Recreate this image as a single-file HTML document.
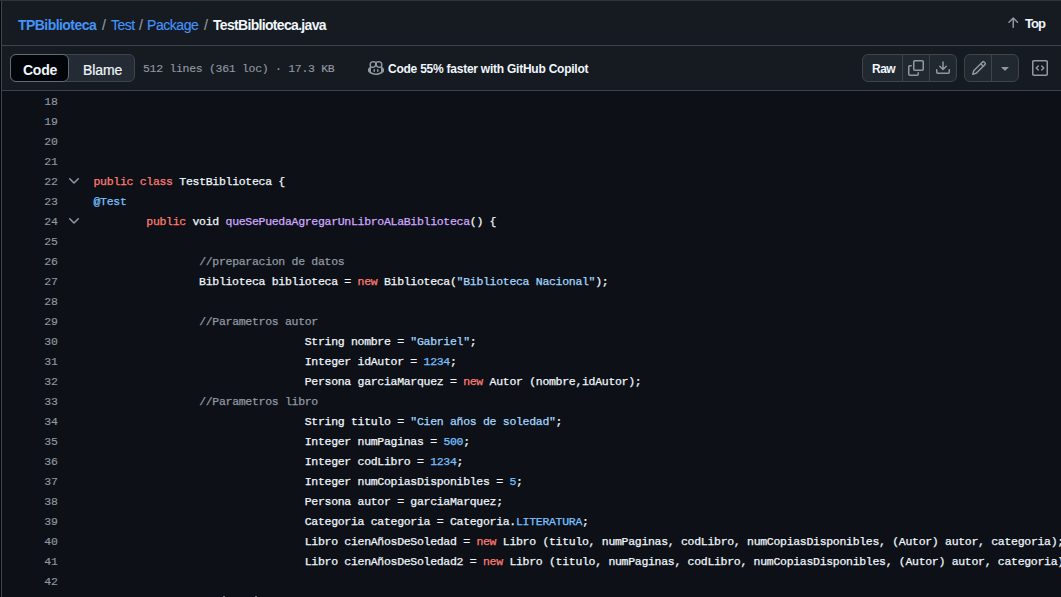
<!DOCTYPE html>
<html><head><meta charset="utf-8">
<style>
*{box-sizing:border-box;margin:0;padding:0}
html,body{width:1061px;height:597px;overflow:hidden;background:#0d1117;font-family:"Liberation Sans",sans-serif;color:#f0f6fc}
.bx{position:absolute}
.t{position:absolute;white-space:pre;line-height:16px;height:16px}
.ic{position:absolute;width:16px;height:16px;fill:#9198a1;overflow:visible}
.n{position:absolute;left:0;width:58px;text-align:right;color:#9198a1;white-space:pre;height:20px;line-height:20px;font-family:"Liberation Mono",monospace;font-size:11.5px;letter-spacing:0px;padding-top:0px;-webkit-text-stroke:0.15px currentColor}
.c{position:absolute;left:93.5px;color:#f0f6fc;white-space:pre;height:20px;line-height:20px;font-family:"Liberation Mono",monospace;font-size:11.5px;letter-spacing:-0.3px;-webkit-text-stroke:0.25px currentColor}
.k{color:#ff7b72}.e{color:#d2a8ff}.s{color:#a5d6ff}.m{color:#79c0ff}.cm{color:#9198a1}
</style></head><body>
<div class="bx" style="left:0;top:1px;width:1px;height:596px;background:#05070a"></div>
<div class="bx" style="left:0;top:0;width:1061px;height:1px;background:#333336"></div>
<div class="bx" style="left:1px;top:1px;width:1060px;height:44px;background:#161b22"></div>
<div class="bx" style="left:1px;top:45px;width:1060px;height:1px;background:#3d444d"></div>
<div class="bx" style="left:1px;top:46px;width:1060px;height:44px;background:#161b22"></div>
<div class="bx" style="left:1px;top:90px;width:1060px;height:1px;background:#3d444d"></div>
<div class="bx" style="left:1px;top:1px;width:1px;height:596px;background:#3d444d"></div>
<div class="bx" style="left:10px;top:54px;width:125px;height:28px;border:1px solid #3d444d;border-radius:6px;background:#252b34"></div>
<div class="bx" style="left:10px;top:54px;width:59px;height:28px;border:1px solid #656c76;border-radius:6px;background:#010409"></div>
<div class="bx" style="left:862px;top:54px;width:95px;height:28px;border:1px solid #3d444d;border-radius:6px;background:#212830"></div>
<div class="bx" style="left:902px;top:55px;width:1px;height:26px;background:#3d444d"></div>
<div class="bx" style="left:929px;top:55px;width:1px;height:26px;background:#3d444d"></div>
<div class="bx" style="left:964px;top:54px;width:55px;height:28px;border:1px solid #3d444d;border-radius:6px;background:#212830"></div>
<div class="bx" style="left:991px;top:55px;width:1px;height:26px;background:#3d444d"></div>
<span class="t" style="left:18px;top:17px;font-size:14px;font-weight:700;letter-spacing:-0.55px;color:#4493f8;font-family:'Liberation Sans',sans-serif;-webkit-text-stroke:0px currentColor">TPBiblioteca</span>
<span class="t" style="left:102px;top:17px;font-size:14px;font-weight:400;letter-spacing:0px;color:#9198a1;font-family:'Liberation Sans',sans-serif;-webkit-text-stroke:0.2px currentColor">/</span>
<span class="t" style="left:111px;top:17px;font-size:14px;font-weight:400;letter-spacing:-0.5px;color:#4493f8;font-family:'Liberation Sans',sans-serif;-webkit-text-stroke:0.15px currentColor">Test</span>
<span class="t" style="left:139px;top:17px;font-size:14px;font-weight:400;letter-spacing:0px;color:#9198a1;font-family:'Liberation Sans',sans-serif;-webkit-text-stroke:0.2px currentColor">/</span>
<span class="t" style="left:147px;top:17px;font-size:14px;font-weight:400;letter-spacing:-0.45px;color:#4493f8;font-family:'Liberation Sans',sans-serif;-webkit-text-stroke:0.15px currentColor">Package</span>
<span class="t" style="left:204px;top:17px;font-size:14px;font-weight:400;letter-spacing:0px;color:#9198a1;font-family:'Liberation Sans',sans-serif;-webkit-text-stroke:0.2px currentColor">/</span>
<span class="t" style="left:213px;top:17px;font-size:14px;font-weight:700;letter-spacing:-0.68px;color:#f0f6fc;font-family:'Liberation Sans',sans-serif;-webkit-text-stroke:0px currentColor">TestBiblioteca.java</span>
<span class="t" style="left:1025px;top:16px;font-size:13px;font-weight:700;letter-spacing:-0.9px;color:#f0f6fc;font-family:'Liberation Sans',sans-serif;-webkit-text-stroke:0px currentColor">Top</span>
<span class="t" style="left:23px;top:62px;font-size:14px;font-weight:700;letter-spacing:-0.25px;color:#f0f6fc;font-family:'Liberation Sans',sans-serif;-webkit-text-stroke:0px currentColor">Code</span>
<span class="t" style="left:83px;top:62px;font-size:14px;font-weight:400;letter-spacing:-0.1px;color:#f0f6fc;font-family:'Liberation Sans',sans-serif;-webkit-text-stroke:0.2px currentColor">Blame</span>
<span class="t" style="left:143px;top:61px;font-size:11.5px;font-weight:400;letter-spacing:-0.3px;color:#9198a1;font-family:'Liberation Mono',monospace;-webkit-text-stroke:0.15px currentColor">512 lines (361 loc) · 17.3 KB</span>
<span class="t" style="left:388px;top:61px;font-size:12px;font-weight:700;letter-spacing:-0.24px;color:#f0f6fc;font-family:'Liberation Sans',sans-serif;-webkit-text-stroke:0px currentColor">Code 55% faster with GitHub Copilot</span>
<span class="t" style="left:872px;top:61px;font-size:12px;font-weight:700;letter-spacing:-0.5px;color:#f0f6fc;font-family:'Liberation Sans',sans-serif;-webkit-text-stroke:0px currentColor">Raw</span>
<svg class="ic" style="left:1005px;top:15px" viewBox="0 0 16 16"><path d="M3.47 7.78a.75.75 0 0 1 0-1.06l4.25-4.25a.75.75 0 0 1 1.06 0l4.25 4.25a.751.751 0 0 1-.018 1.042.751.751 0 0 1-1.042.018L9 4.81v7.44a.75.75 0 0 1-1.5 0V4.81L4.53 7.78a.75.75 0 0 1-1.06 0Z"/></svg>
<svg class="ic" style="left:368px;top:60px" viewBox="0 0 16 16"><path d="M7.998 15.035c-4.562 0-7.873-2.914-7.998-3.749V9.338c.085-.628.677-1.686 1.588-2.065.013-.07.024-.143.036-.218.029-.183.06-.384.126-.612-.201-.508-.254-1.084-.254-1.656 0-.87.128-1.769.693-2.484.579-.733 1.494-1.124 2.724-1.261 1.206-.134 2.262.034 2.944.765.05.053.096.108.139.165.044-.057.094-.112.143-.165.682-.731 1.738-.899 2.944-.765 1.23.137 2.145.528 2.724 1.261.566.715.693 1.614.693 2.484 0 .572-.053 1.148-.254 1.656.066.228.098.429.126.612.012.076.024.148.037.218.924.385 1.522 1.471 1.591 2.095v1.872c0 .766-3.351 3.795-8.002 3.795Zm0-1.485c2.28 0 4.584-1.11 5.002-1.433V7.862l-.023-.116c-.49.21-1.075.291-1.727.291-1.146 0-2.059-.327-2.71-.991A3.222 3.222 0 0 1 8 6.303a3.24 3.24 0 0 1-.544.743c-.65.664-1.563.991-2.71.991-.652 0-1.236-.081-1.727-.291l-.023.116v4.255c.419.323 2.722 1.433 5.002 1.433ZM6.762 2.83c-.193-.206-.637-.413-1.682-.297-1.019.113-1.479.404-1.713.7-.247.312-.369.789-.369 1.554 0 .793.129 1.171.308 1.371.162.181.519.379 1.442.379.853 0 1.339-.235 1.638-.54.315-.322.527-.827.617-1.553.117-.935-.037-1.395-.241-1.614Zm4.155-.297c-1.044-.116-1.488.091-1.681.297-.204.219-.359.679-.242 1.614.091.726.303 1.231.618 1.553.299.305.784.54 1.638.54.922 0 1.28-.198 1.442-.379.179-.2.308-.578.308-1.371 0-.765-.123-1.242-.37-1.554-.233-.296-.693-.587-1.713-.7Z"/><path d="M6.25 9.037a.75.75 0 0 1 .75.75v1.501a.75.75 0 0 1-1.5 0V9.787a.75.75 0 0 1 .75-.75Zm4.25.75v1.501a.75.75 0 0 1-1.5 0V9.787a.75.75 0 0 1 1.5 0Z"/></svg>
<svg class="ic" style="left:908px;top:60px" viewBox="0 0 16 16"><path d="M0 6.75C0 5.784.784 5 1.75 5h1.5a.75.75 0 0 1 0 1.5h-1.5a.25.25 0 0 0-.25.25v7.5c0 .138.112.25.25.25h7.5a.25.25 0 0 0 .25-.25v-1.5a.75.75 0 0 1 1.5 0v1.5A1.75 1.75 0 0 1 9.25 16h-7.5A1.75 1.75 0 0 1 0 14.25Z"/><path d="M5 1.75C5 .784 5.784 0 6.75 0h7.5C15.216 0 16 .784 16 1.75v7.5A1.75 1.75 0 0 1 14.25 11h-7.5A1.75 1.75 0 0 1 5 9.25Zm1.75-.25a.25.25 0 0 0-.25.25v7.5c0 .138.112.25.25.25h7.5a.25.25 0 0 0 .25-.25v-7.5a.25.25 0 0 0-.25-.25Z"/></svg>
<svg class="ic" style="left:935px;top:60px" viewBox="0 0 16 16"><path d="M2.75 14A1.75 1.75 0 0 1 1 12.25v-2.5a.75.75 0 0 1 1.5 0v2.5c0 .138.112.25.25.25h10.5a.25.25 0 0 0 .25-.25v-2.5a.75.75 0 0 1 1.5 0v2.5A1.75 1.75 0 0 1 13.25 14Z"/><path d="M7.25 7.689V2a.75.75 0 0 1 1.5 0v5.689l1.97-1.969a.749.749 0 1 1 1.06 1.06l-3.25 3.25a.749.749 0 0 1-1.06 0L4.22 6.78a.749.749 0 1 1 1.06-1.06l1.97 1.969Z"/></svg>
<svg class="ic" style="left:971px;top:60px" viewBox="0 0 16 16"><path d="M11.013 1.427a1.75 1.75 0 0 1 2.474 0l1.086 1.086a1.75 1.75 0 0 1 0 2.474l-8.61 8.61c-.21.21-.47.364-.756.445l-3.251.93a.75.75 0 0 1-.927-.928l.929-3.25c.081-.286.235-.547.445-.758l8.61-8.61Zm.176 4.823L9.75 4.81l-6.286 6.287a.253.253 0 0 0-.064.108l-.558 1.953 1.953-.558a.253.253 0 0 0 .108-.064Zm1.238-3.763a.25.25 0 0 0-.354 0L10.811 3.75l1.439 1.44 1.263-1.263a.25.25 0 0 0 0-.354Z"/></svg>
<svg class="ic" style="left:997px;top:60px" viewBox="0 0 16 16"><path d="m4.427 7.427 3.396 3.396a.25.25 0 0 0 .354 0l3.396-3.396A.25.25 0 0 0 11.396 7H4.604a.25.25 0 0 0-.177.427Z"/></svg>
<svg class="ic" style="left:1032px;top:60px" viewBox="0 0 16 16"><path d="M0 1.75C0 .784.784 0 1.75 0h12.5C15.216 0 16 .784 16 1.75v12.5A1.75 1.75 0 0 1 14.25 16H1.75A1.75 1.75 0 0 1 0 14.25Zm1.75-.25a.25.25 0 0 0-.25.25v12.5c0 .138.112.25.25.25h12.5a.25.25 0 0 0 .25-.25V1.75a.25.25 0 0 0-.25-.25Zm7.47 3.97a.75.75 0 0 1 1.06 0l2 2a.75.75 0 0 1 0 1.06l-2 2a.749.749 0 0 1-1.275-.326.749.749 0 0 1 .215-.734L10.69 8 9.22 6.53a.75.75 0 0 1 0-1.06ZM6.78 6.53 5.31 8l1.47 1.47a.749.749 0 0 1-.326 1.275.749.749 0 0 1-.734-.215l-2-2a.75.75 0 0 1 0-1.06l2-2a.751.751 0 0 1 1.042.018.751.751 0 0 1 .018 1.042Z"/></svg>
<div class="n" style="top:92px">18</div>
<div class="n" style="top:112px">19</div>
<div class="n" style="top:132px">20</div>
<div class="n" style="top:152px">21</div>
<div class="n" style="top:172px">22</div>
<div class="c" style="top:172px"><span class="k">public</span> <span class="k">class</span> TestBiblioteca {</div>
<svg class="ic" style="left:66px;top:173px" viewBox="0 0 16 16"><path d="M12.78 5.22a.749.749 0 0 1 0 1.06l-4.25 4.25a.749.749 0 0 1-1.06 0L3.22 6.28a.749.749 0 1 1 1.06-1.06L8 8.939l3.72-3.719a.749.749 0 0 1 1.06 0Z"/></svg>
<div class="n" style="top:192px">23</div>
<div class="c" style="top:192px"><span class="m">@Test</span></div>
<div class="n" style="top:212px">24</div>
<div class="c" style="top:212px">        <span class="k">public</span> void <span class="e">queSePuedaAgregarUnLibroALaBiblioteca</span>() {</div>
<svg class="ic" style="left:66px;top:213px" viewBox="0 0 16 16"><path d="M12.78 5.22a.749.749 0 0 1 0 1.06l-4.25 4.25a.749.749 0 0 1-1.06 0L3.22 6.28a.749.749 0 1 1 1.06-1.06L8 8.939l3.72-3.719a.749.749 0 0 1 1.06 0Z"/></svg>
<div class="n" style="top:232px">25</div>
<div class="n" style="top:252px">26</div>
<div class="c" style="top:252px">                <span class="cm">//preparacion de datos</span></div>
<div class="n" style="top:272px">27</div>
<div class="c" style="top:272px">                Biblioteca biblioteca = <span class="k">new</span> Biblioteca(<span class="s">"Biblioteca Nacional"</span>);</div>
<div class="n" style="top:292px">28</div>
<div class="n" style="top:312px">29</div>
<div class="c" style="top:312px">                <span class="cm">//Parametros autor</span></div>
<div class="n" style="top:332px">30</div>
<div class="c" style="top:332px">                                String nombre = <span class="s">"Gabriel"</span>;</div>
<div class="n" style="top:352px">31</div>
<div class="c" style="top:352px">                                Integer idAutor = <span class="m">1234</span>;</div>
<div class="n" style="top:372px">32</div>
<div class="c" style="top:372px">                                Persona garciaMarquez = <span class="k">new</span> Autor (nombre,idAutor);</div>
<div class="n" style="top:392px">33</div>
<div class="c" style="top:392px">                <span class="cm">//Parametros libro</span></div>
<div class="n" style="top:412px">34</div>
<div class="c" style="top:412px">                                String titulo = <span class="s">"Cien años de soledad"</span>;</div>
<div class="n" style="top:432px">35</div>
<div class="c" style="top:432px">                                Integer numPaginas = <span class="m">500</span>;</div>
<div class="n" style="top:452px">36</div>
<div class="c" style="top:452px">                                Integer codLibro = <span class="m">1234</span>;</div>
<div class="n" style="top:472px">37</div>
<div class="c" style="top:472px">                                Integer numCopiasDisponibles = <span class="m">5</span>;</div>
<div class="n" style="top:492px">38</div>
<div class="c" style="top:492px">                                Persona autor = garciaMarquez;</div>
<div class="n" style="top:512px">39</div>
<div class="c" style="top:512px">                                Categoria categoria = Categoria.<span class="m">LITERATURA</span>;</div>
<div class="n" style="top:532px">40</div>
<div class="c" style="top:532px">                                Libro cienAñosDeSoledad = <span class="k">new</span> Libro (titulo, numPaginas, codLibro, numCopiasDisponibles, (Autor) autor, categoria);</div>
<div class="n" style="top:552px">41</div>
<div class="c" style="top:552px">                                Libro cienAñosDeSoledad2 = <span class="k">new</span> Libro (titulo, numPaginas, codLibro, numCopiasDisponibles, (Autor) autor, categoria);</div>
<div class="n" style="top:572px">42</div>
<div class="n" style="top:592px">43</div>
<div class="c" style="top:592px">                <span class="cm">//Ejecucion</span></div>
<div class="bx" style="left:223px;top:596px;width:2px;height:1px;background:#6e7681"></div>
<div class="bx" style="left:255px;top:596px;width:2px;height:1px;background:#6e7681"></div>
</body></html>
